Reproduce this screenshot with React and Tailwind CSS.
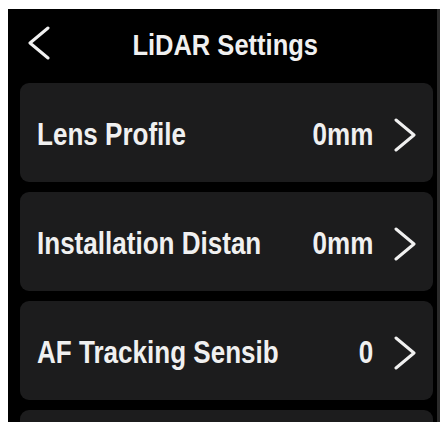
import React from 'react';

const rows = [
  { label: 'Lens Profile', value: '0mm' },
  { label: 'Installation Distan', value: '0mm' },
  { label: 'AF Tracking Sensib', value: '0' },
  { label: '', value: '' },
];

// the device font is a narrow DIN-like face, so squeeze Liberation Sans a bit
const font = { fontFamily: '"Liberation Sans", Arial, sans-serif' };

const Chevron = ({ left }) => (
  <svg width="24" height="34" viewBox="0 0 24 34" fill="none" stroke="currentColor" strokeWidth="3" strokeLinecap="round" strokeLinejoin="round">
    {left ? <polyline points="21,2 3,17 21,32" /> : <polyline points="3,2 21,17 3,32" />}
  </svg>
);

const App = () => {
  return (
    <div className="w-[445px] h-[426px] bg-white pt-[9px] pl-[8px] overflow-hidden" style={font}>
      <div className="w-[432px] h-[413px] bg-black border-r-[3px] border-[#2a2a2a] flex flex-col overflow-hidden text-[#f0f0f0]">
        <div className="relative h-[74px] flex items-center justify-center shrink-0">
          <div className="absolute left-[19px] top-[17px]">
            <Chevron left />
          </div>
          <h1 className="text-[30px] font-bold mt-[-4px] ml-[6px] scale-x-[0.85] whitespace-nowrap">LiDAR Settings</h1>
        </div>
        <div className="flex flex-col gap-[10px] pl-3 pr-[4px]">
          {rows.map((r, i) => (
            <div key={i} className="h-[99px] shrink-0 rounded-[9px] bg-[#1c1c1d] flex items-center pt-[5px] pl-[17px] pr-[16px]">
              <span className="flex-1 min-w-0">
                <span className="inline-block text-[31px] font-bold whitespace-nowrap scale-x-[0.84] origin-left">{r.label}</span>
              </span>
              {r.label && (
                <>
                  <span className="inline-block text-[31px] font-bold whitespace-nowrap scale-x-[0.84] origin-right">{r.value}</span>
                  <span className="ml-[20px] flex">
                    <Chevron />
                  </span>
                </>
              )}
            </div>
          ))}
        </div>
      </div>
    </div>
  );
};

export default App;
